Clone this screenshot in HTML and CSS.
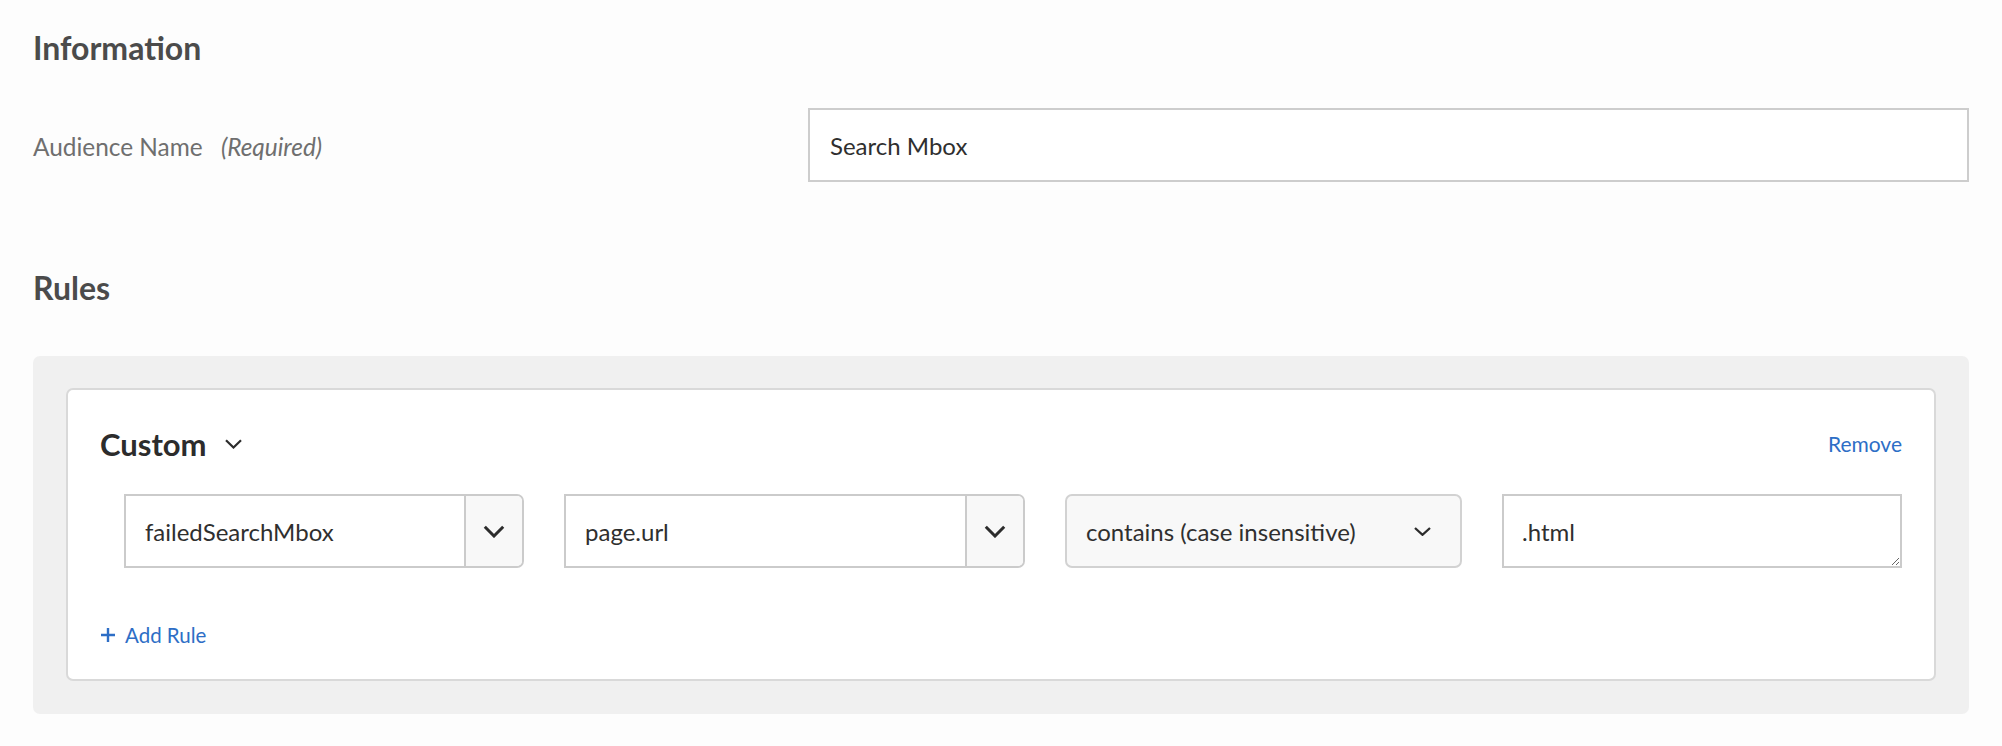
FILE: index.html
```html
<!DOCTYPE html>
<html lang="en">
<head>
<meta charset="utf-8">
<title>Audience</title>
<link rel="stylesheet" href="styles.css">
</head>
<body>
<main class="page">
  <section class="info">
    <h2 class="section-title">Information</h2>
    <div class="form-row">
      <label class="field-label" for="aud-name">Audience Name <em class="req">(Required)</em></label>
      <input id="aud-name" class="text-input" type="text" value="Search Mbox">
    </div>
  </section>

  <section class="rules">
    <h2 class="section-title">Rules</h2>
    <div class="rules-panel">
      <div class="rule-card">
        <div class="card-head">
          <button class="type-toggle" type="button">Custom
            <svg class="chev-sm" viewBox="0 0 17 10" width="17" height="10"><path d="M1 1.2 L8.5 8.5 L16 1.2" fill="none" stroke="#2c2c2c" stroke-width="2.2"/></svg>
          </button>
          <a class="link remove" href="#">Remove</a>
        </div>

        <div class="rule-row">
          <div class="combo">
            <input class="combo-input" type="text" value="failedSearchMbox">
            <button class="combo-btn" type="button"><svg viewBox="0 0 22 13" width="22" height="13"><path d="M1.8 1.8 L11 11 L20.2 1.8" fill="none" stroke="#2c2c2c" stroke-width="3"/></svg></button>
          </div>
          <div class="combo">
            <input class="combo-input" type="text" value="page.url">
            <button class="combo-btn" type="button"><svg viewBox="0 0 22 13" width="22" height="13"><path d="M1.8 1.8 L11 11 L20.2 1.8" fill="none" stroke="#2c2c2c" stroke-width="3"/></svg></button>
          </div>
          <button class="select-btn" type="button">
            <span>contains (case insensitive)</span>
            <svg class="chev-sm" viewBox="0 0 17 9" width="17" height="9"><path d="M1 1 L8.5 7.8 L16 1" fill="none" stroke="#2c2c2c" stroke-width="2.3"/></svg>
          </button>
          <textarea class="value-box">.html</textarea>
        </div>

        <a class="link add-rule" href="#">
          <svg viewBox="0 0 16 16" width="16" height="16"><path d="M8 1 V15 M1 8 H15" fill="none" stroke="#2d6ec6" stroke-width="2.4"/></svg>
          <span>Add Rule</span>
        </a>
      </div>
    </div>
  </section>
</main>
</body>
</html>
```
FILE: styles.css
```css
* { box-sizing: border-box; }

html, body {
  margin: 0;
  background: #fdfdfd;
  font-family: "Lato", "Open Sans", sans-serif;
}

.page {
  padding: 28px 33px 0;
}

.section-title {
  margin: 0;
  font-size: 32px;
  line-height: 40px;
  font-weight: 700;
  color: #4b4b4b;
}

.form-row {
  margin-top: 40px;
  display: flex;
  align-items: center;
}

.field-label {
  width: 775px;
  flex: none;
  font-size: 24.4px;
  color: #6f6f6f;
  padding-top: 3px;
}

.req {
  margin-left: 12px;
  font-style: italic;
}

.text-input {
  flex: 1;
  height: 74px;
  border: 2px solid #cdcdcd;
  background: #fff;
  padding: 0 20px;
  font-family: inherit;
  font-size: 24px;
  color: #2f2f2f;
  outline: none;
}

.rules {
  margin-top: 86px;
}

.rules-panel {
  margin-top: 48px;
  background: #f0f0f0;
  border-radius: 7px;
  padding: 32px 33px 33px;
}

.rule-card {
  background: #fff;
  border: 2px solid #d9d9d9;
  border-radius: 7px;
  padding: 36px 32px 30px;
}

.card-head {
  display: flex;
  align-items: center;
  justify-content: space-between;
  height: 36px;
}

.type-toggle {
  display: flex;
  align-items: center;
  gap: 18px;
  border: none;
  background: none;
  padding: 0;
  font-family: inherit;
  font-size: 31px;
  line-height: 36px;
  font-weight: 700;
  color: #2c2c2c;
}

.chev-sm {
  display: block;
  flex: none;
}

.link {
  color: #2d6ec6;
  text-decoration: none;
  font-size: 21px;
}

.remove {
  line-height: 28px;
}

.rule-row {
  margin: 32px 0 0 24px;
  display: grid;
  grid-template-columns: 400px 461px 397px 1fr;
  column-gap: 40px;
  height: 74px;
}

.combo {
  display: flex;
  border: 2px solid #cbcbcb;
  border-radius: 0 7px 7px 0;
  overflow: hidden;
  background: #fff;
}

.combo-input {
  flex: 1;
  min-width: 0;
  border: none;
  padding: 0 19px;
  font-family: inherit;
  font-size: 24px;
  color: #2f2f2f;
  background: #fff;
  outline: none;
}

.combo-btn {
  width: 58px;
  flex: none;
  border: none;
  border-left: 2px solid #cbcbcb;
  background: #f8f8f8;
  display: flex;
  align-items: center;
  justify-content: center;
  padding: 0;
}

.select-btn {
  display: flex;
  align-items: center;
  justify-content: space-between;
  border: 2px solid #d2d2d2;
  border-radius: 7px;
  background: #f8f8f8;
  padding: 0 29px 0 19px;
  font-family: inherit;
  font-size: 24px;
  color: #2f2f2f;
  text-align: left;
}

.value-box {
  border: 2px solid #cbcbcb;
  background: #fff;
  padding: 21px 18px 0;
  font-family: inherit;
  font-size: 24px;
  line-height: 30px;
  color: #2f2f2f;
  resize: both;
  outline: none;
  height: 74px;
}

.add-rule {
  margin-top: 53px;
  display: inline-flex;
  align-items: center;
  gap: 9px;
  font-size: 20.5px;
  line-height: 28px;
}

.add-rule svg {
  display: block;
}
```
